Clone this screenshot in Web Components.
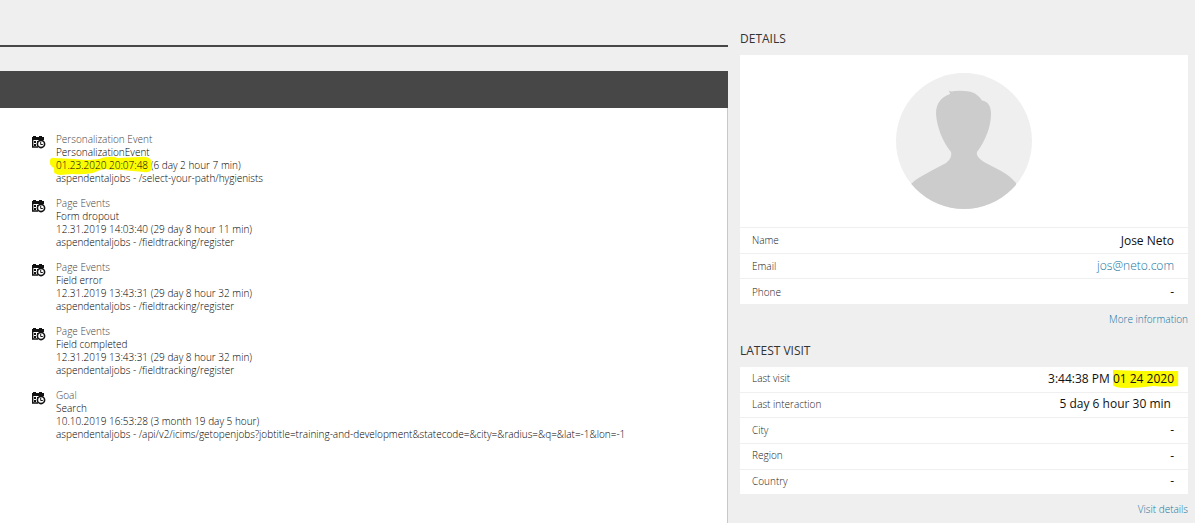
<!DOCTYPE html>
<html lang="en">
<head>
<meta charset="utf-8">
<title>Contact profile</title>
<style>
  html { height: 100%; }
  body { margin: 0; min-height: 100%; display: flex; background: #efefef; font-family: "Open Sans", sans-serif; font-size: 10px; color: #111; }
</style>
</head>
<body>
<contact-page>
  <event-timeline slot="main">
    <timeline-event>
      <span slot="type">Personalization Event</span>
      <span slot="name">PersonalizationEvent</span>
      <high-light slot="date" brush="stroke">01.23.2020 20:07:48</high-light>
      <span slot="age">(6 day 2 hour 7 min)</span>
      <span slot="url">aspendentaljobs - /select-your-path/hygienists</span>
    </timeline-event>
    <timeline-event>
      <span slot="type">Page Events</span>
      <span slot="name">Form dropout</span>
      <span slot="date">12.31.2019 14:03:40</span>
      <span slot="age">(29 day 8 hour 11 min)</span>
      <span slot="url">aspendentaljobs - /fieldtracking/register</span>
    </timeline-event>
    <timeline-event>
      <span slot="type">Page Events</span>
      <span slot="name">Field error</span>
      <span slot="date">12.31.2019 13:43:31</span>
      <span slot="age">(29 day 8 hour 32 min)</span>
      <span slot="url">aspendentaljobs - /fieldtracking/register</span>
    </timeline-event>
    <timeline-event>
      <span slot="type">Page Events</span>
      <span slot="name">Field completed</span>
      <span slot="date">12.31.2019 13:43:31</span>
      <span slot="age">(29 day 8 hour 32 min)</span>
      <span slot="url">aspendentaljobs - /fieldtracking/register</span>
    </timeline-event>
    <timeline-event>
      <span slot="type">Goal</span>
      <span slot="name">Search</span>
      <span slot="date">10.10.2019 16:53:28</span>
      <span slot="age">(3 month 19 day 5 hour)</span>
      <span slot="url">aspendentaljobs - /api/v2/icims/getopenjobs?jobtitle=training-and-development&amp;statecode=&amp;city=&amp;radius=&amp;q=&amp;lat=-1&amp;lon=-1</span>
    </timeline-event>
  </event-timeline>
  <contact-details slot="side"></contact-details>
  <latest-visit slot="side"></latest-visit>
</contact-page>

<template id="contact-page">
  <style>
    :host { flex: 1; display: grid; grid-template-columns: minmax(0, 1fr) minmax(0, 448px); column-gap: 12px; padding-right: 7px; }
    main { display: flex; flex-direction: column; }
    .rule { height: 45px; border-bottom: 2px solid #474747; margin-bottom: 24px; }
    aside { display: flex; flex-direction: column; gap: 16px; padding-top: 30px; }
  </style>
  <main><div class="rule"></div><slot name="main"></slot></main>
  <aside><slot name="side"></slot></aside>
</template>

<template id="event-timeline">
  <style>
    :host { flex: 1; display: flex; flex-direction: column; }
    .bar { height: 37px; background: #474747; }
    .list { flex: 1; display: flex; flex-direction: column; gap: 12px; padding: 25px 24px 24px 30px; background: #fff; border-right: 1px solid #c8c8c8; }
  </style>
  <div class="bar"></div>
  <div class="list"><slot></slot></div>
</template>

<template id="timeline-event">
  <style>
    :host { display: flex; gap: 10px; line-height: 13px; font-weight: 300; color: #000; }
    svg { flex: none; width: 16px; height: 16px; margin-top: 1px; }
    .type { color: #444; }
    p { margin: 0; overflow-wrap: anywhere; }
  </style>
  <svg viewBox="0 0 16 16" aria-hidden="true">
    <path d="M2 3h1V2h3v1h3V2h3v1h2v3H2z" fill="#111"/>
    <path d="M2.700 5v8H8" fill="none" stroke="#111" stroke-width="1.400"/>
    <path d="M4 7h2v2H4zM7 7h1.500v1.500H7zM4 10h2v2H4z" fill="#111"/>
    <circle cx="11" cy="10" r="3.600" fill="#fff" stroke="#111" stroke-width="1.600"/>
    <path d="M10.700 7.800V10.500H12.800" fill="none" stroke="#111"/>
  </svg>
  <div>
    <p class="type"><slot name="type"></slot></p>
    <p><slot name="name"></slot></p>
    <p><slot name="date"></slot> <slot name="age"></slot></p>
    <p><slot name="url"></slot></p>
  </div>
</template>

<template id="high-light">
  <style>
    :host { display: inline-block; position: relative; z-index: 0; }
    mark { background: none; color: inherit; }
    svg { position: absolute; z-index: -1; fill: #fdfb00; display: none; overflow: visible; }
    :host([brush="stroke"]) .stroke { display: block; left: -6px; top: -3px; width: calc(100% + 10px); height: 20px; }
    :host([brush="block"]) .block { display: block; left: 0; top: 0; width: calc(100% + 4px); height: 18px; }
  </style>
  <svg class="stroke" viewBox="0 0 100 20" preserveAspectRatio="none" aria-hidden="true"><path d="M0 4Q1 1 4 2L24 3Q32 4 38 4L48 3Q52 1 57 1Q62 0 66 2L88 1Q96 0 99 4L100 13Q97 17 92 16L70 14Q58 14 54 13Q48 14 42 17Q30 19 22 18L10 19Q4 18 4 16V12Q0 10 0 7Z"/></svg>
  <svg class="block" viewBox="0 0 64 18" preserveAspectRatio="none" aria-hidden="true"><path d="M0 0L28 1L64 1V16Q52 17 40 16Q26 18 12 18Q2 18 0 15Z"/></svg>
  <mark><slot></slot></mark>
</template>

<template id="info-card">
  <style>
    :host { display: block; }
    h2 { margin: 0 0 8px; font-size: 12px; line-height: 17px; font-weight: 400; color: #333; }
    .card { background: #fff; }
    .more { padding-top: 8px; text-align: right; line-height: 14px; font-weight: 300; }
  </style>
  <h2><slot name="title"></slot></h2>
  <div class="card"><slot></slot></div>
  <div class="more"><slot name="more"></slot></div>
</template>

<template id="profile-avatar">
  <style>
    :host { display: flex; justify-content: center; padding: 18px 0; }
    svg { width: 136px; height: 136px; }
  </style>
  <svg viewBox="0 0 136 136" role="img" aria-label="Profile picture">
    <clipPath id="disc"><circle cx="68" cy="68" r="68"/></clipPath>
    <g clip-path="url(#disc)">
      <path d="M0 0h136v136H0z" fill="#efefef"/>
      <path d="M54 20L52.500 17.500Q55 19 59 18Q66 17.500 73 18.500C79 19.500 83 23 86 27.500C92 28.500 95 33 95 41C95 53 90 67 81 79C80 82 83 86 88 89C99 95 112 100 120 110V136H15V111C23 103 38 97 50 90C54 87 56 83 55 79C46 68 41 54 40 41C40 29 46 24 54 21Z" fill="#ccc"/>
    </g>
  </svg>
</template>

<template id="contact-details">
  <style>
    :host { display: block; }
    table { width: 100%; height: 77px; border-collapse: separate; border-spacing: 0; }
    th, td { padding: 0 14px 0 12px; border-top: 1px solid #efefef; font-weight: 400; }
    th { text-align: left; color: #222; font-weight: 300; }
    td { text-align: right; font-size: 12px; }
    a { color: #1673a0; text-decoration: none; font-weight: 300; }
  </style>
  <info-card>
    <span slot="title">DETAILS</span>
    <profile-avatar></profile-avatar>
    <table>
      <tr><th scope="row">Name</th><td>Jose Neto</td></tr>
      <tr><th scope="row">Email</th><td><a href="mailto:jos@neto.com">jos@neto.com</a></td></tr>
      <tr><th scope="row">Phone</th><td>-</td></tr>
    </table>
    <a slot="more" href="#information">More information</a>
  </info-card>
</template>

<template id="latest-visit">
  <style>
    :host { display: block; }
    table { width: 100%; height: 127px; border-collapse: separate; border-spacing: 0; }
    th, td { padding: 0 14px 2px 12px; border-bottom: 1px solid #efefef; font-weight: 400; }
    tr:last-child > * { border-bottom: 0; }
    th { text-align: left; color: #222; font-weight: 300; }
    td { text-align: right; font-size: 12px; }
    a { color: #1673a0; text-decoration: none; font-weight: 300; }
  </style>
  <info-card>
    <span slot="title">LATEST VISIT</span>
    <table>
      <tr><th scope="row">Last visit</th><td>3:44:38 PM <high-light brush="block">01 24 2020</high-light></td></tr>
      <tr><th scope="row">Last interaction</th><td>5 day 6 hour 30 min&nbsp;</td></tr>
      <tr><th scope="row">City</th><td>-</td></tr>
      <tr><th scope="row">Region</th><td>-</td></tr>
      <tr><th scope="row">Country</th><td>-</td></tr>
    </table>
    <a slot="more" href="#visit">Visit details</a>
  </info-card>
</template>

<script>
  class TemplateElement extends HTMLElement {
    constructor() {
      super();
      const template = document.getElementById(this.localName);
      this.attachShadow({ mode: 'open' }).append(template.content.cloneNode(true));
    }
  }
  for (const name of ['contact-page', 'event-timeline', 'timeline-event', 'high-light', 'info-card', 'profile-avatar', 'contact-details', 'latest-visit']) {
    customElements.define(name, class extends TemplateElement {});
  }
</script>
</body>
</html>
